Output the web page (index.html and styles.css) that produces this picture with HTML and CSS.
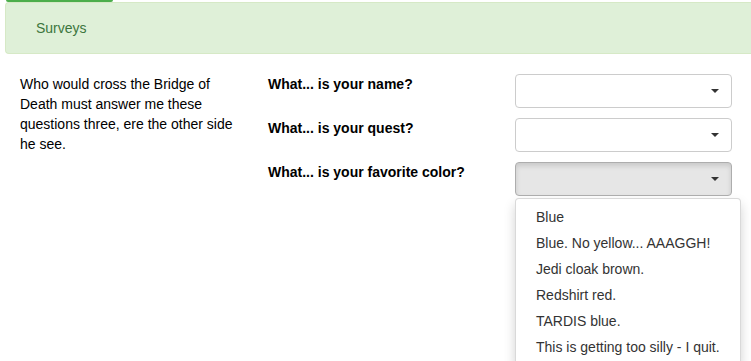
FILE: index.html
```html
<!DOCTYPE html>
<html>
<head>
<meta charset="utf-8">
<link rel="stylesheet" href="styles.css">
</head>
<body>
<div class="tabbar"><span class="tab-active"></span></div>
<div class="panel-heading">Surveys</div>
<div class="panel-body">
  <div class="col intro">Who would cross the Bridge of Death must answer me these questions three, ere the other side he see.</div>
  <div class="col labels">
    <div class="label-row">What... is your name?</div>
    <div class="label-row">What... is your quest?</div>
    <div class="label-row">What... is your favorite color?</div>
  </div>
  <div class="col selects">
    <div class="select-wrap"><div class="select"><span class="caret"></span></div></div>
    <div class="select-wrap"><div class="select"><span class="caret"></span></div></div>
    <div class="select-wrap is-open">
      <div class="select pressed"><span class="caret"></span></div>
      <div class="choice-menu">
        <div class="choice">Blue</div>
        <div class="choice">Blue. No yellow... AAAGGH!</div>
        <div class="choice">Jedi cloak brown.</div>
        <div class="choice">Redshirt red.</div>
        <div class="choice">TARDIS blue.</div>
        <div class="choice">This is getting too silly - I quit.</div>
      </div>
    </div>
  </div>
</div>
</body>
</html>
```

FILE: styles.css
```css
html {
  overflow: hidden;
}
body {
  margin: 0;
  padding: 0;
  font-family: "Liberation Sans", Arial, Helvetica, sans-serif;
  font-size: 14px;
  line-height: 20px;
  color: #000;
  background: #fff;
}
.tabbar {
  height: 2px;
  padding-left: 6px;
  display: flex;
}
.tab-active {
  display: block;
  width: 107px;
  height: 2px;
  background: #4cae4c;
  border-radius: 0 0 2px 2px;
}
.panel-heading {
  margin-left: 5px;
  background: #dff0d8;
  border: 1px solid #d6e9c6;
  border-right: none;
  border-radius: 4px 0 0 4px;
  color: #3c763d;
  padding: 15px 0 15px 30px;
}
.panel-body {
  display: grid;
  grid-template-columns: 248px 247px 247px;
  align-items: start;
  padding: 20px 0 0 5px;
}
.col {
  padding: 0 15px;
}
.labels {
  display: flex;
  flex-direction: column;
  gap: 24px;
  font-weight: bold;
}
.selects {
  display: flex;
  flex-direction: column;
  gap: 10px;
}
.select {
  position: relative;
  box-sizing: border-box;
  height: 34px;
  background: #fff;
  border: 1px solid #ccc;
  border-radius: 4px;
}
.select.pressed {
  background: #e6e6e6;
  border-color: #adadad;
  box-shadow: inset 0 3px 5px rgba(0,0,0,.125);
}
.caret {
  position: absolute;
  right: 12px;
  top: 50%;
  margin-top: -2px;
  width: 0;
  height: 0;
  border-top: 4px solid #333;
  border-left: 4px solid transparent;
  border-right: 4px solid transparent;
}
.choice-menu {
  width: max-content;
  margin-top: 2px;
  padding: 5px 0;
  background: #fff;
  border: 1px solid rgba(0,0,0,.15);
  border-radius: 4px;
  box-shadow: 0 6px 12px rgba(0,0,0,.175);
  white-space: nowrap;
  color: #333;
}
.choice {
  padding: 3px 20px;
  line-height: 20px;
}
```
